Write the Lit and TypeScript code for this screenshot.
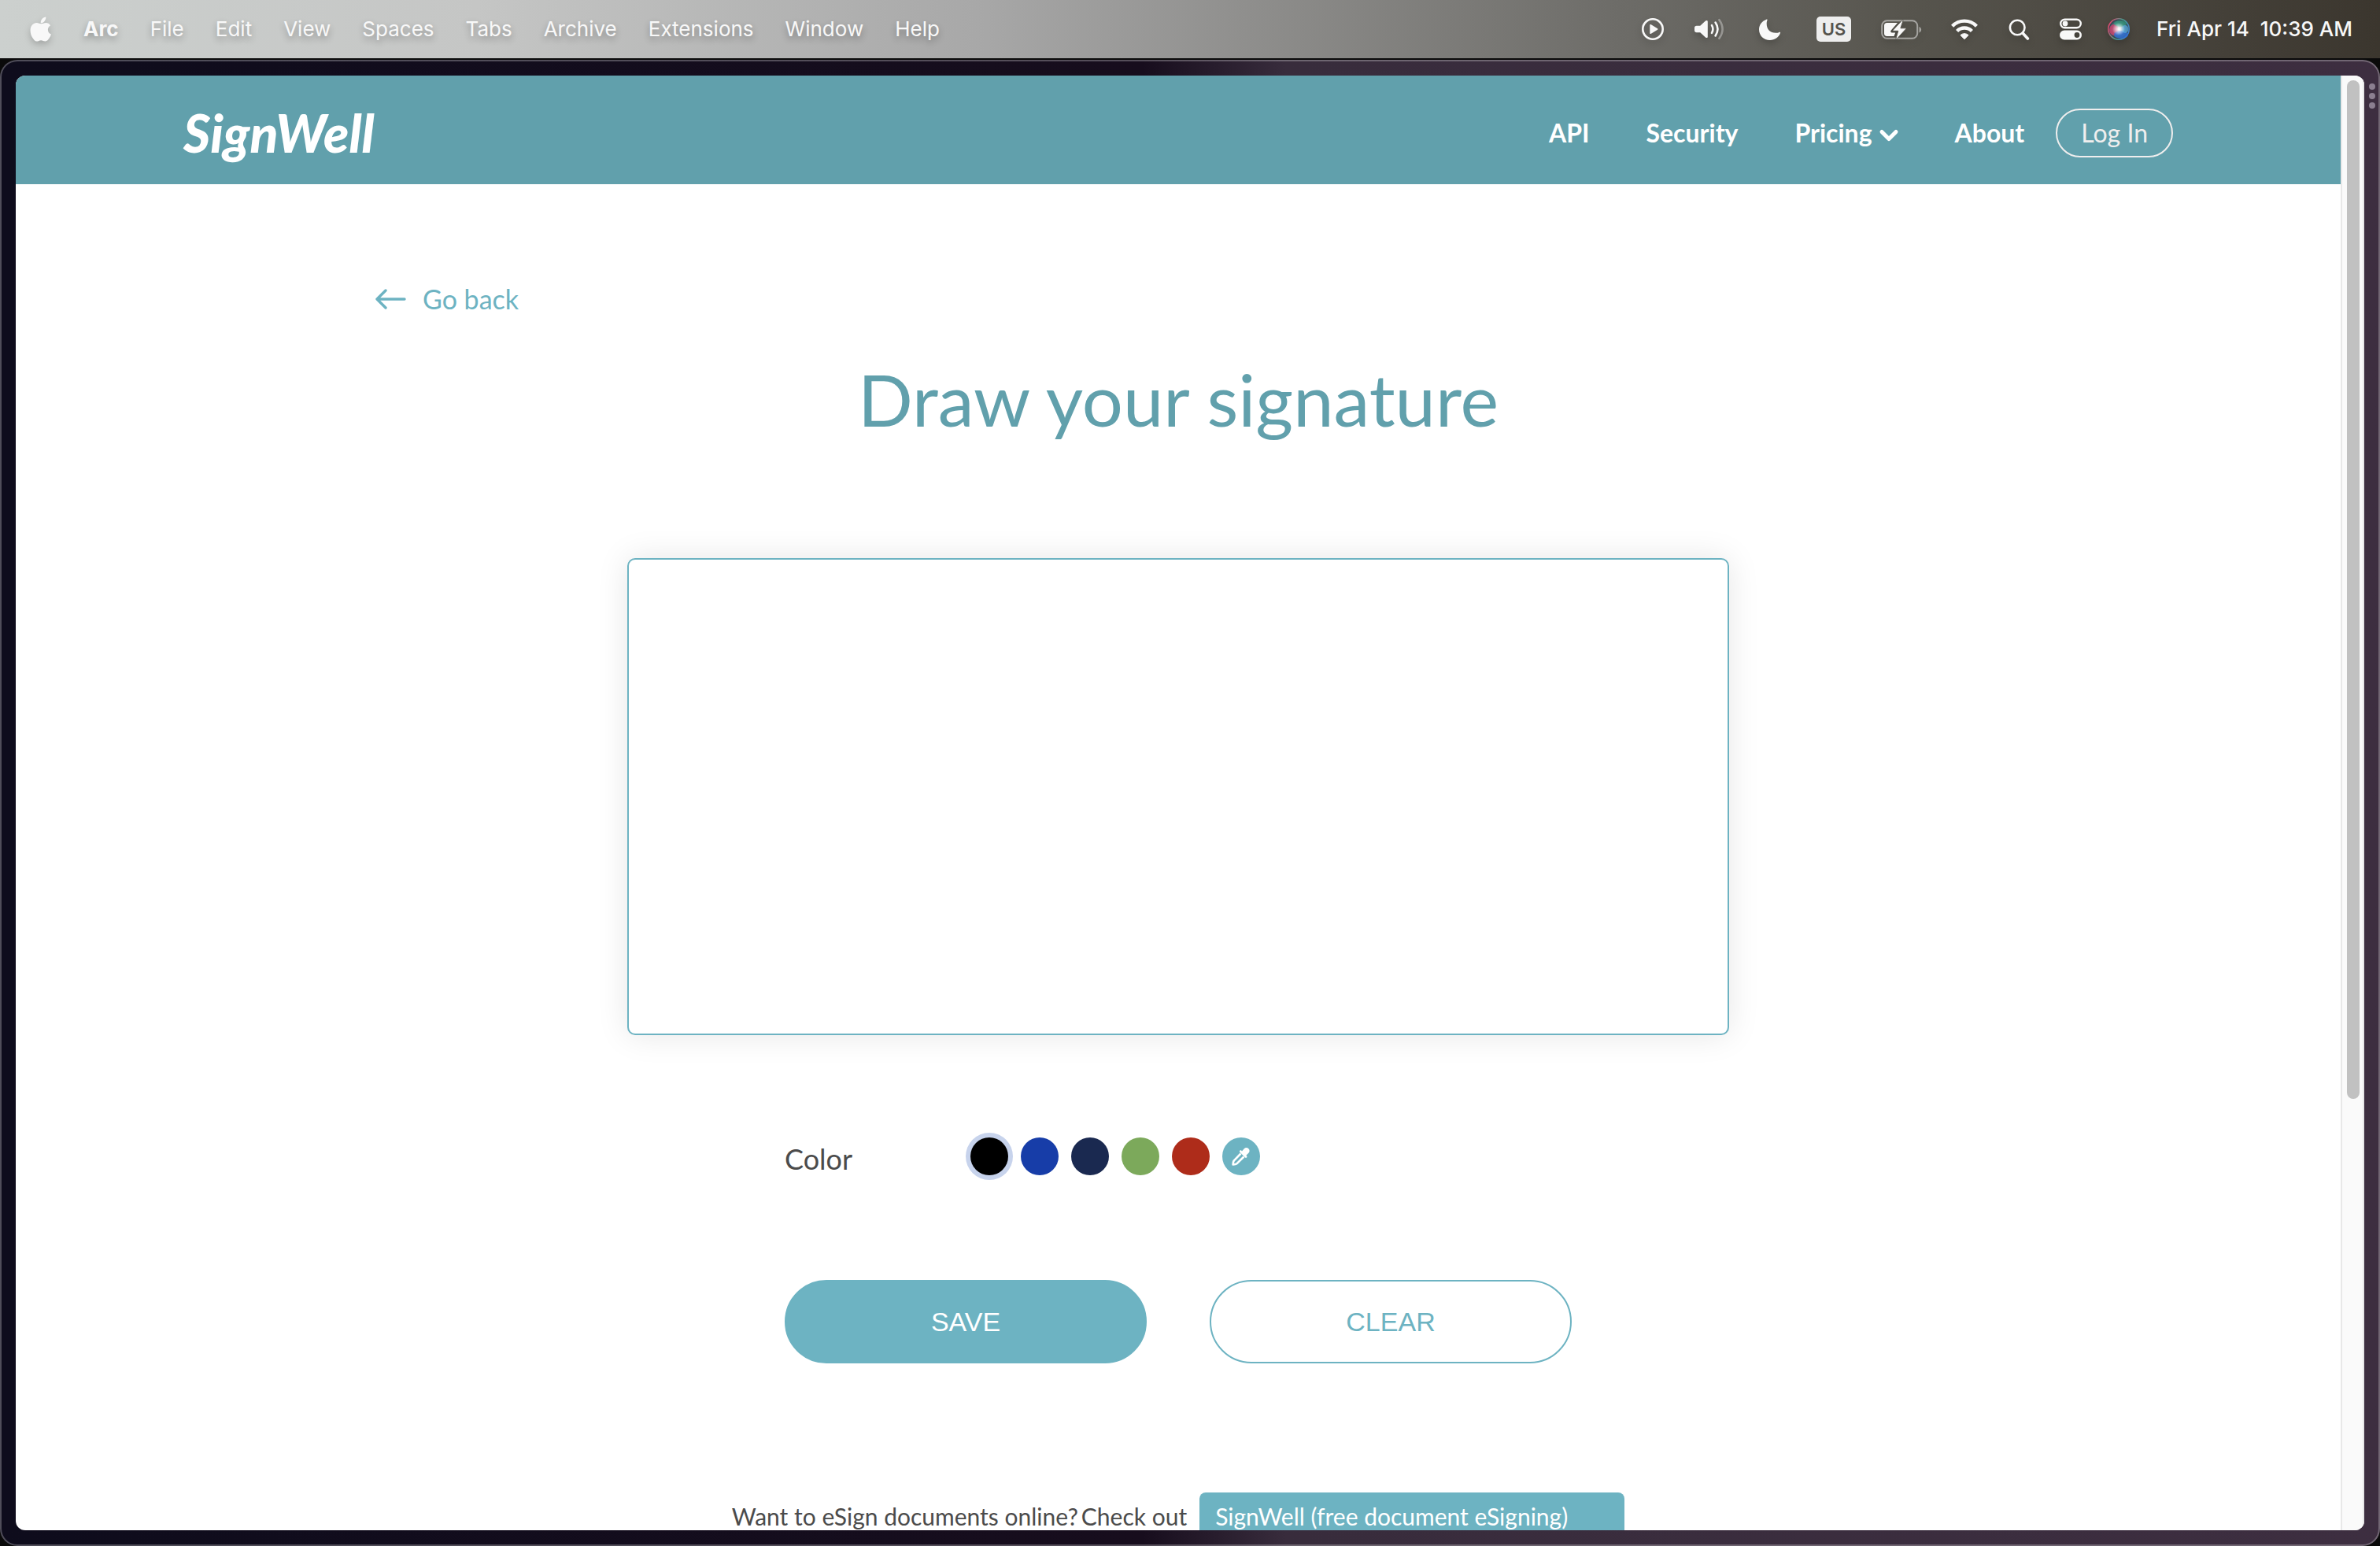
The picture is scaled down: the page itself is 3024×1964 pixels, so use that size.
import { LitElement, html, css, svg } from "lit";
import { customElement, state } from "lit/decorators.js";
import { classMap } from "lit/directives/class-map.js";

const menus = ["Arc", "File", "Edit", "View", "Spaces", "Tabs", "Archive", "Extensions", "Window", "Help"];

const inks = [
  { name: "Black", value: "#000000" },
  { name: "Blue", value: "#173da8" },
  { name: "Navy", value: "#1a2950" },
  { name: "Green", value: "#7ca95b" },
  { name: "Red", value: "#ae2c1a" },
];

const icons = {
  apple: svg`<path d="M19.3 0.5c.3 2-.6 4-1.8 5.400-1.200 1.400-3 2.400-4.700 2.300-.3-1.900.6-3.900 1.700-5.200C15.800 1.600 17.700.6 19.300.5z M25.200 11.300c-2 1.200-3.300 3-3.300 5.400 0 2.800 1.700 5 4.100 5.900-.5 1.700-1.300 3.200-2.300 4.700-1.400 2.100-2.900 4.200-5.200 4.200-2.200 0-2.900-1.300-5.400-1.300-2.500 0-3.300 1.300-5.300 1.400-2.200.1-3.900-2.200-5.300-4.300C-.4 23-1.700 15.700 1.300 11.600c1.500-2.300 3.900-3.600 6.300-3.600 2.400 0 3.900 1.300 5.900 1.300 1.900 0 3.100-1.300 5.900-1.300 2.100 0 4.300 1.200 5.800 3.300z"/>`,
  play: svg`<circle cx="14" cy="14" r="12.700" fill="none" stroke="currentColor" stroke-width="2.600"/><path d="M10.300 8.800v10.400c0 .7.600 1 1.200.7l8.500-5.100c.6-.4.6-1.200 0-1.600l-8.500-5.100c-.6-.3-1.200 0-1.200.7z"/>`,
  volume: svg`<path d="M1 12.500c0-1.700 1-2.700 2.700-2.700h4.500l6.800-6.200c1.400-1.200 2.800-.9 2.800.9v19c0 1.800-1.400 2.100-2.800.9l-6.800-6.200H3.700C2 18.200 1 17.200 1 15.500z"/><g fill="none" stroke="currentColor" stroke-width="2.600" stroke-linecap="round"><path d="M23 9.200c1.900 3.200 1.900 6.400 0 9.600"/><path d="M27.600 5.600c3.800 5.600 3.800 11.200 0 16.800"/><path d="M32.400 2.200c5.600 7.900 5.600 15.700 0 23.600" opacity=".35"/></g>`,
  moon: svg`<path d="M10.400 1.800c.5-.7 1.400-.2 1.100.7-.6 1.700-.8 3-.8 4.800 0 7 4.500 11.500 11.500 11.500 1.800 0 3.200-.3 4.700-.9.900-.4 1.500.3 1.100 1.200-2.100 5.300-7.100 8.900-13.200 8.900C7 28 1 22.200 1 14.500 1 8.900 4.600 3.800 10.400 1.800z"/>`,
  battery: svg`<rect x="1.200" y="3.200" width="45" height="22.600" rx="6.500" fill="none" stroke="currentColor" stroke-width="2" opacity=".5"/><path d="M48.500 11v7.500c1.600-.6 2.600-2 2.600-3.750s-1-3.150-2.600-3.750z" opacity=".5"/><path d="M7.500 6H21l-8.200 9.400c-1.200 1.500-.5 3 1.200 3h4.200L16.500 23h-9C5.300 23 4 21.700 4 19.500v-10C4 7.300 5.300 6 7.500 6z"/><path d="M26.800 2.800 15.300 15.200c-.4.500-.1 1.100.5 1.100h6L19 25.800c-.3 1 .4 1.300 1.100.6l11.400-12.500c.4-.5.100-1.100-.5-1.100h-6.100L27.900 3.500c.3-1-.4-1.400-1.100-.7z" stroke="#5a5850" stroke-width="1"/>`,
  wifi: svg`<g fill="none" stroke="currentColor" stroke-width="4.400"><path d="M1.600 10.200C10.100 1.400 23.900 1.400 32.400 10.200"/><path d="M7.600 16.500c5.200-5.300 13.600-5.300 18.800 0"/></g><path d="M17 26.800l5-5.100c-2.800-2.700-7.200-2.700-10 0z" stroke="currentColor" stroke-width="1" stroke-linejoin="round"/>`,
  search: svg`<g fill="none" stroke="currentColor" stroke-linecap="round"><circle cx="12.200" cy="12" r="9.300" stroke-width="2.600"/><path d="M19 19l6.400 7" stroke-width="3.600"/></g>`,
  controls: svg`<rect x="1.200" y="1.700" width="25.600" height="10.600" rx="5.300" fill="none" stroke="currentColor" stroke-width="2.400"/><circle cx="7" cy="7" r="3.400"/><path fill-rule="evenodd" d="M6 15.500h16a6 6 0 0 1 0 12H6a6 6 0 0 1 0-12zm16 2.600a3.400 3.400 0 1 0 0 6.800 3.400 3.400 0 0 0 0-6.800z"/>`,
  siri: svg`<defs>
      <radialGradient id="orb"><stop offset="0" stop-color="#dfe9f2"/><stop offset=".45" stop-color="#6f8f9e"/><stop offset="1" stop-color="#27343f"/></radialGradient>
      <radialGradient id="glow"><stop offset="0" stop-color="#fff"/><stop offset="1" stop-color="#fff" stop-opacity="0"/></radialGradient>
      <linearGradient id="rim" x1="0" y1=".3" x2="1" y2=".7"><stop offset="0" stop-color="#e0486e"/><stop offset=".5" stop-color="#4c9a8a"/><stop offset="1" stop-color="#3f7fd0"/></linearGradient>
    </defs>
    <circle cx="14" cy="14" r="13.200" fill="url(#orb)" stroke="url(#rim)" stroke-width="1.600"/>
    <ellipse cx="8" cy="15" rx="6" ry="7" fill="#d8406c" opacity=".75"/>
    <ellipse cx="16" cy="7" rx="8" ry="4" fill="#2f9f7c" opacity=".65"/>
    <ellipse cx="17" cy="21" rx="9" ry="5" fill="#2f6fd6" opacity=".8"/>
    <ellipse cx="22" cy="14" rx="4.500" ry="5" fill="#52a9dd" opacity=".7"/>
    <circle cx="14" cy="14" r="8" fill="url(#glow)"/>`,
  arrow: svg`<path d="M13 2 2 13l11 11M2.500 13H37" fill="none" stroke="currentColor" stroke-width="3.400" stroke-linecap="round" stroke-linejoin="round"/>`,
  chevron: svg`<path d="M3 3.500 12 12.500 21 3.500" fill="none" stroke="currentColor" stroke-width="5" stroke-linecap="round" stroke-linejoin="round"/>`,
  dropper: svg`<path d="M15.800 2.200c1.600-1.600 4-1.600 5.600 0s1.600 4 0 5.600l-3 3 .6.600c.6.600.6 1.400 0 2s-1.400.6-2 0l-6.600-6.600c-.6-.6-.6-1.400 0-2s1.400-.6 2 0l.6.600z"/><path d="M11.500 8.500l-8.600 8.800c-.5.600-.8 1.200-.9 2l-.4 3.200 3.200-.5c.7-.1 1.300-.4 1.800-.9l8.800-8.600" fill="none" stroke="currentColor" stroke-width="2.600" stroke-linejoin="round"/>`,
};

const icon = (name: keyof typeof icons, w: number, h: number) => html`<svg
  class="icon"
  width=${w}
  height=${h}
  viewBox="0 0 ${w} ${h}"
  fill="currentColor"
  aria-hidden="true"
>${icons[name]}</svg>`;

const reset = css`
  * {
    box-sizing: border-box;
  }
  button {
    font: inherit;
    color: inherit;
    text-shadow: inherit;
    background: none;
    border: 0;
    padding: 0;
    cursor: pointer;
  }
  a {
    color: inherit;
    text-decoration: none;
  }
  .icon {
    display: block;
    flex: none;
    overflow: visible;
  }
`;

@customElement("menu-bar")
class MenuBar extends LitElement {
  static styles = [
    reset,
    css`
      :host {
        display: flex;
        justify-content: space-between;
        align-items: center;
        height: 74px;
        padding: 0 35px 0 39px;
        background: linear-gradient(90deg, #ccd0ce 0%, #c5c6c5 20%, #a8a8a8 41%, #6d6c68 68%, #57554e 80%, #3b362e 100%);
        color: #f8f8f8;
        font: 400 26px/32px Inter, "Liberation Sans", sans-serif;
        white-space: nowrap;
      }
      .menus,
      .status,
      .tray,
      .clock {
        display: flex;
        align-items: center;
      }
      .menus {
        gap: 40px;
        text-shadow: 0 4px 8px rgba(0, 0, 0, 0.3);
      }
      .app {
        font-weight: 700;
      }
      .status {
        gap: 33px;
      }
      .tray {
        gap: 38px;
      }
      .icon {
        filter: drop-shadow(0 4px 4px rgba(0, 0, 0, 0.2));
      }
      .clock {
        gap: 34px;
        font-weight: 500;
      }
      .input-source {
        width: 44px;
        border-radius: 5px;
        background: #eeeeee;
        color: #55534d;
        font-size: 22px;
        font-weight: 600;
        text-align: center;
      }
    `,
  ];

  render() {
    return html`
      <nav class="menus" aria-label="Menu bar">
        <button aria-label="Apple">${icon("apple", 27, 32)}</button>
        ${menus.map((m, i) => html`<button class=${classMap({ app: i === 0 })}>${m}</button>`)}
      </nav>
      <div class="status">
        <div class="tray">
          ${icon("play", 28, 28)} ${icon("volume", 44, 28)} ${icon("moon", 36, 28)}
          <span class="input-source">US</span>
          ${icon("battery", 51, 28)} ${icon("wifi", 34, 28)} ${icon("search", 28, 28)}
          ${icon("controls", 28, 28)}
        </div>
        <div class="clock">${icon("siri", 28, 28)}<time>Fri Apr 14&nbsp; 10:39 AM</time></div>
      </div>
    `;
  }
}

@customElement("site-header")
class SiteHeader extends LitElement {
  static styles = [
    reset,
    css`
      :host {
        display: block;
        flex: none;
        background: #61a0ac;
        color: #fff;
        font: 700 32px/40px Lato, "Liberation Sans", sans-serif;
      }
      .inner {
        display: flex;
        justify-content: space-between;
        align-items: center;
        max-width: 2528px;
        height: 138px;
        margin: 0 auto;
        padding-top: 8px;
      }
      .logo {
        font: italic 900 66px/80px Lato, "Liberation Sans", sans-serif;
      }
      .actions,
      .links,
      .drop {
        display: flex;
        align-items: center;
      }
      .actions {
        gap: 40px;
      }
      .links {
        gap: 72px;
      }
      .drop {
        gap: 9px;
      }
      .drop .icon {
        margin-top: 6px;
      }
      .login {
        padding: 9px 30px;
        border: 2px solid #efeeee;
        border-radius: 31px;
        color: #efeeee;
        font-weight: 400;
      }
    `,
  ];

  render() {
    return html`
      <header class="inner">
        <a class="logo" href="#">SignWell</a>
        <div class="actions">
          <nav class="links">
            <a href="#api">API</a>
            <a href="#security">Security</a>
            <button class="drop">Pricing ${icon("chevron", 24, 16)}</button>
            <a href="#about">About</a>
          </nav>
          <a class="login" href="#login">Log In</a>
        </div>
      </header>
    `;
  }
}

@customElement("signature-page")
class SignaturePage extends LitElement {
  static styles = [
    reset,
    css`
      :host {
        display: block;
        color: #4b4b4b;
        font: 400 36px/54px Lato, "Liberation Sans", sans-serif;
      }
      .page {
        max-width: 2040px;
        margin: 0 auto;
        padding-top: 126px;
      }
      .back {
        display: flex;
        align-items: center;
        gap: 22px;
        width: fit-content;
        color: #6db3c2;
        font-size: 34px;
        line-height: 40px;
      }
      .title {
        margin: 57px 0 152px;
        color: #61a0ac;
        font-size: 92px;
        font-weight: 400;
        line-height: 100px;
        text-align: center;
      }
      .pad {
        display: block;
        width: 100%;
        max-width: 1400px;
        height: 606px;
        margin: 0 auto;
        border: 2px solid #6db3c2;
        border-radius: 10px;
        background: #fff;
        box-shadow: 0 0 40px rgba(0, 0, 0, 0.1);
      }
      .tools {
        max-width: 1000px;
        margin: 130px auto 0;
      }
      .colors {
        display: grid;
        grid-template-columns: 236px 1fr;
        margin: 0 0 127px;
      }
      .swatches {
        display: flex;
        gap: 16px;
      }
      .swatch {
        appearance: none;
        width: 48px;
        height: 48px;
        margin: 0;
        border-radius: 50%;
        background: var(--ink);
        cursor: pointer;
      }
      .swatch:checked {
        box-shadow: 0 0 0 6px #c7d3ec;
      }
      .custom {
        display: grid;
        place-items: center;
        width: 48px;
        height: 48px;
        border-radius: 50%;
        background: #6db3c2;
        color: #fff;
      }
      .buttons {
        display: grid;
        grid-template-columns: 1fr 1fr;
        gap: 80px;
      }
      .button {
        height: 106px;
        border: 2px solid #6db3c2;
        border-radius: 53px;
        color: #6db3c2;
        font: 34px/40px "Liberation Sans", Arial, sans-serif;
      }
      .primary {
        background: #6db3c2;
        color: #fff;
      }
      .promo {
        display: flex;
        justify-content: center;
        gap: 16px;
        margin: 164px 0 0;
        font-size: 30px;
        line-height: 60px;
        white-space: nowrap;
      }
      .promo-text {
        display: flex;
        gap: 4px;
      }
      .promo-link {
        width: 540px;
        padding: 0 20px;
        border-radius: 8px;
        background: #6db3c2;
        color: #fff;
      }
    `,
  ];

  @state() ink = inks[0].value;

  render() {
    return html`
      <main class="page">
        <a class="back" href="#back">${icon("arrow", 38, 26)}Go back</a>
        <h1 class="title">Draw your signature</h1>
        <canvas class="pad" aria-label="Signature pad"></canvas>
        <div class="tools">
          <div class="colors" role="radiogroup" aria-labelledby="color-label">
            <span id="color-label">Color</span>
            <div class="swatches">
              ${inks.map(
                (c) => html`<input
                  class="swatch"
                  type="radio"
                  name="ink"
                  aria-label=${c.name}
                  style="--ink:${c.value}"
                  .checked=${this.ink === c.value}
                  @change=${() => (this.ink = c.value)}
                />`,
              )}
              <button class="custom" aria-label="Pick a color">${icon("dropper", 24, 24)}</button>
            </div>
          </div>
          <div class="buttons">
            <button class="button primary">SAVE</button>
            <button class="button">CLEAR</button>
          </div>
        </div>
        <p class="promo">
          <span class="promo-text"><span>Want to eSign documents online?</span> <span>Check out</span></span>
          <a class="promo-link" href="#signwell">SignWell (free document eSigning)</a>
        </p>
      </main>
    `;
  }
}

@customElement("app-root")
class AppRoot extends LitElement {
  static styles = [
    reset,
    css`
      :host {
        display: flex;
        flex-direction: column;
        height: 100vh;
        overflow: hidden;
        background: #0a0a0a;
      }
      .window {
        position: relative;
        display: flex;
        flex: 1;
        min-height: 0;
        margin-top: 2px;
        padding: 18px;
        border: 2px solid rgba(255, 255, 255, 0.27);
        border-radius: 22px;
        background: linear-gradient(90deg, #0e0c1c 0%, #170d1d 48%, #382c3c 54%, #3d2e40 100%) border-box;
      }
      .view {
        display: flex;
        flex: 1;
        min-width: 0;
        border-radius: 12px;
        background: #fff;
        overflow: hidden;
      }
      .document {
        display: flex;
        flex: 1;
        flex-direction: column;
        min-width: 0;
        overflow: hidden;
      }
      .track {
        flex: none;
        width: 30px;
        padding: 6px;
        border: solid #e8e8e8;
        border-width: 0 2px;
        background: #fafafa;
      }
      .thumb {
        width: 16px;
        height: calc(100% - 542px);
        border-radius: 8px;
        background: #c1c1c1;
      }
      .handle {
        position: absolute;
        top: 28px;
        right: 4px;
        display: grid;
        gap: 4px;
      }
      .dot {
        width: 8px;
        height: 8px;
        border-radius: 50%;
        background: #8b7f90;
      }
    `,
  ];

  render() {
    return html`
      <menu-bar></menu-bar>
      <div class="window">
        <div class="view">
          <div class="document">
            <site-header></site-header>
            <signature-page></signature-page>
          </div>
          <div class="track"><div class="thumb"></div></div>
        </div>
        <div class="handle"><i class="dot"></i><i class="dot"></i><i class="dot"></i></div>
      </div>
    `;
  }
}
